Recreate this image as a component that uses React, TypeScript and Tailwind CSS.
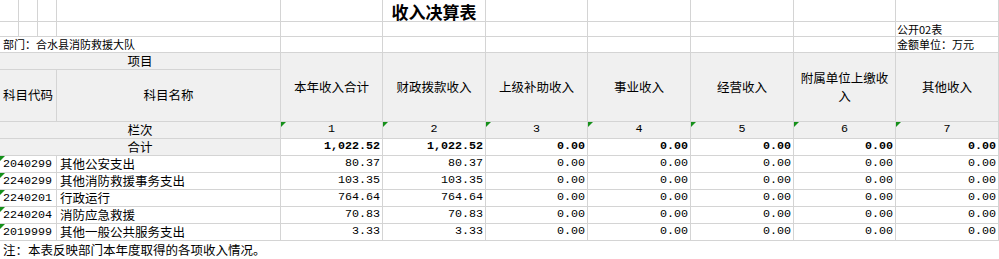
import React from "react";

const cjk = "font-['Noto_Sans_CJK_SC',sans-serif]";
const mono = "font-['Liberation_Mono',monospace]";
const line = "border-r border-b border-[#d4d4d4]";

const heads = [
  "本年收入合计",
  "财政拨款收入",
  "上级补助收入",
  "事业收入",
  "经营收入",
  "附属单位上缴收入",
  "其他收入",
];

const rows = [
  { code: "2040299", name: "其他公安支出", total: "80.37", fiscal: "80.37" },
  { code: "2240299", name: "其他消防救援事务支出", total: "103.35", fiscal: "103.35" },
  { code: "2240201", name: "行政运行", total: "764.64", fiscal: "764.64" },
  { code: "2240204", name: "消防应急救援", total: "70.83", fiscal: "70.83" },
  { code: "2019999", name: "其他一般公共服务支出", total: "3.33", fiscal: "3.33" },
];

function Flag() {
  return (
    <span className="absolute left-0 top-0 h-0 w-0 border-r-[5px] border-t-[5px] border-r-transparent border-t-[#15901a]" />
  );
}

function SplitCell() {
  return (
    <div className="grid grid-cols-[19px_19px_19px]">
      <div className={line} />
      <div className={line} />
      <div className={line} />
    </div>
  );
}

function Num({ v, bold }: { v: string; bold?: boolean }) {
  return (
    <div
      className={`${line} flex items-center justify-end pr-[2px] ${mono} text-[11.7px] leading-none ${
        bold ? "font-bold" : ""
      }`}
    >
      {v}
    </div>
  );
}

export default function App() {
  return (
    <div className={`h-[259px] w-[999px] overflow-hidden bg-white text-black ${cjk}`}>
      <div className="grid grid-cols-[57px_224px_102px_103px_102px_103px_103px_102px_103px] grid-rows-[22px_15px_16px_17px_52px_17px_17px_17px_17px_17px_17px_17px_18px]">
        {/* title row */}
        <SplitCell />
        <div className={line} />
        <div className={line} />
        <div className={`${line} flex items-center justify-center pt-[2px] text-[17px] font-bold leading-none`}>
          收入决算表
        </div>
        <div className={line} />
        <div className={line} />
        <div className={line} />
        <div className={line} />
        <div className={line} />

        {/* 公开02表 */}
        <SplitCell />
        <div className={line} />
        <div className={line} />
        <div className={line} />
        <div className={line} />
        <div className={line} />
        <div className={line} />
        <div className={line} />
        <div className={`${line} flex items-center pl-[1px] text-[11px] leading-none`}>公开02表</div>

        {/* 部门 */}
        <div className={`col-span-2 ${line} flex items-center pl-[3px] text-[11px] leading-none`}>
          部门：合水县消防救援大队
        </div>
        <div className={line} />
        <div className={line} />
        <div className={line} />
        <div className={line} />
        <div className={line} />
        <div className={line} />
        <div className={`${line} flex items-center pl-[1px] text-[11px] leading-none`}>
          金额单位：万元
        </div>

        {/* header */}
        <div className={`col-span-2 ${line} flex items-center justify-center bg-[#f0f0f0] text-[12.5px] leading-none`}>
          项目
        </div>
        {heads.map((h) => (
          <div
            key={h}
            className={`row-span-2 ${line} flex items-center justify-center bg-[#f0f0f0] px-[2px] text-center text-[12.5px] leading-[18px]`}
          >
            {h}
          </div>
        ))}
        <div className={`${line} flex items-center justify-center bg-[#f0f0f0] text-[12.5px] leading-none`}>科目代码</div>
        <div className={`${line} flex items-center justify-center bg-[#f0f0f0] text-[12.5px] leading-none`}>科目名称</div>

        {/* 栏次 */}
        <div className={`col-span-2 ${line} flex items-center justify-center bg-[#f0f0f0] text-[12.5px] leading-none`}>
          栏次
        </div>
        {[1, 2, 3, 4, 5, 6, 7].map((n) => (
          <div
            key={n}
            className={`relative ${line} flex items-center justify-center bg-[#f0f0f0] ${mono} text-[11.7px] leading-none`}
          >
            <Flag />
            {n}
          </div>
        ))}

        {/* 合计 */}
        <div className={`col-span-2 ${line} flex items-center justify-center bg-[#f0f0f0] text-[12.5px] leading-none`}>
          合计
        </div>
        <Num v="1,022.52" bold />
        <Num v="1,022.52" bold />
        <Num v="0.00" bold />
        <Num v="0.00" bold />
        <Num v="0.00" bold />
        <Num v="0.00" bold />
        <Num v="0.00" bold />

        {/* data rows */}
        {rows.map((r) => (
          <React.Fragment key={r.code}>
            <div className={`relative ${line} flex items-center pl-[3px] pt-[1px] ${mono} text-[11.7px] leading-none`}>
              <Flag />
              {r.code}
            </div>
            <div className={`${line} flex items-center pl-[3px] text-[12.5px] leading-none`}>{r.name}</div>
            <Num v={r.total} />
            <Num v={r.fiscal} />
            <Num v="0.00" />
            <Num v="0.00" />
            <Num v="0.00" />
            <Num v="0.00" />
            <Num v="0.00" />
          </React.Fragment>
        ))}

        {/* note */}
        <div className="col-span-9 flex items-center pl-[3px] text-[12.5px] leading-none">
          注：本表反映部门本年度取得的各项收入情况。
        </div>
      </div>
    </div>
  );
}
